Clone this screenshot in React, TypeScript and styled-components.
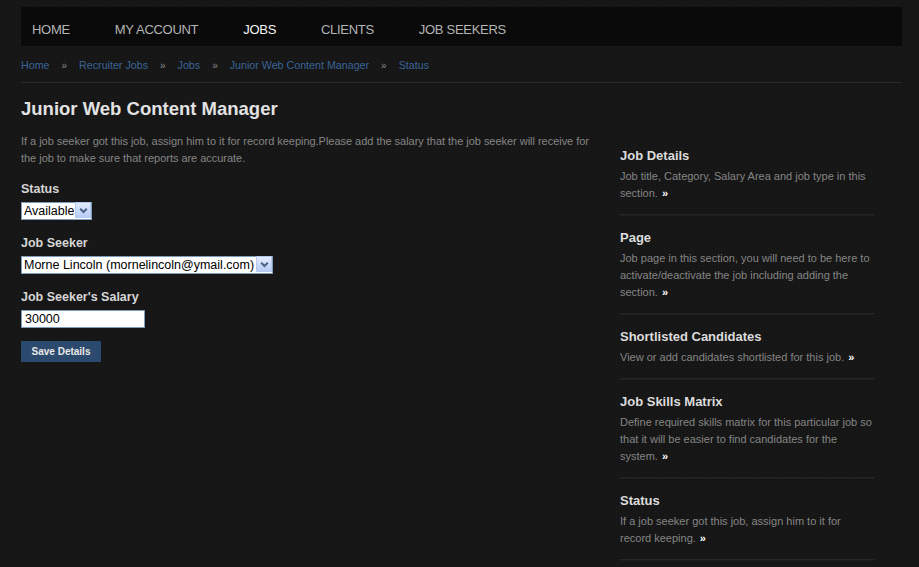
import React from "react";
import styled, { createGlobalStyle } from "styled-components";

const GlobalStyle = createGlobalStyle`
  html, body {
    margin: 0;
    padding: 0;
    background: #161616;
  }
  body {
    font-family: "Liberation Sans", Arial, sans-serif;
    color: #888;
  }
`;

const Page = styled.div`
  width: 919px;
  min-height: 567px;
  padding: 7px 17px 0 21px;
  box-sizing: border-box;
  background-color: #161616;
  background-image: radial-gradient(rgba(255, 255, 255, 0.025) 1px, transparent 1px);
  background-size: 3px 3px;
  overflow: hidden;
`;

const Nav = styled.nav`
  display: flex;
  align-items: center;
  gap: 45px;
  height: 39px;
  padding: 5px 0 0 11px;
  box-sizing: border-box;
  background: #0a0a0a;
`;

const NavItem = styled.a<{ active?: boolean }>`
  font-family: "Liberation Sans", Arial, sans-serif;
  font-size: 13px;
  letter-spacing: -0.3px;
  color: ${(props) => (props.active ? "#f4f4f4" : "#b4b4b4")};
  text-decoration: none;
  line-height: 1;
`;

const Crumbs = styled.div`
  display: flex;
  align-items: center;
  height: 37px;
  border-bottom: 1px solid #2a2a2a;
  font-size: 10.7px;
  padding-top: 2px;
  box-sizing: border-box;
`;

const Crumb = styled.a`
  color: #3a6496;
  text-decoration: none;
`;

const Sep = styled.span`
  color: #8a8a8a;
  font-size: 10px;
  margin: 0 12px;
`;

const Body = styled.div`
  display: flex;
  gap: 24px;
`;

const Main = styled.div`
  width: 575px;
`;

const Title = styled.h1`
  margin: 15px 0 0;
  font-size: 18.5px;
  line-height: 22px;
  font-weight: bold;
  color: #e2e2e2;
`;

const Intro = styled.p`
  margin: 13px 0 0;
  font-size: 11px;
  line-height: 17px;
  color: #858585;
  letter-spacing: -0.03px;
`;

const Label = styled.div<{ gapTop?: number }>`
  margin-top: ${(props) => props.gapTop ?? 14}px;
  font-size: 12.5px;
  font-weight: bold;
  color: #d6d6d6;
  line-height: 16px;
`;

const SelectWrap = styled.div<{ width: number }>`
  position: relative;
  width: ${(props) => props.width}px;
  height: 18px;
  margin-top: 4px;
`;

const Select = styled.select`
  appearance: none;
  width: 100%;
  height: 18px;
  box-sizing: border-box;
  border: 1px solid #7f9db9;
  background: #fff;
  font-family: "Liberation Sans", Arial, sans-serif;
  font-size: 12.5px;
  color: #000;
  padding: 0 17px 0 2px;
  margin: 0;
  border-radius: 0;
  outline: none;
`;

const Arrow = styled.span`
  position: absolute;
  top: 1px;
  right: 1px;
  width: 16px;
  height: 16px;
  background: linear-gradient(#e3ebfe, #b9ccf6);
  border: 1px solid #b4c7ef;
  box-sizing: border-box;
  display: flex;
  align-items: center;
  justify-content: center;
  pointer-events: none;
`;

const Input = styled.input`
  display: block;
  width: 124px;
  height: 18px;
  box-sizing: border-box;
  margin-top: 5px;
  border: 1px solid #7f9db9;
  background: #fff;
  font-family: "Liberation Sans", Arial, sans-serif;
  font-size: 12.5px;
  padding: 0 3px;
  color: #000;
  outline: none;
`;

const Button = styled.button`
  display: block;
  margin-top: 13px;
  width: 80px;
  height: 21px;
  border: none;
  background: #2c4a6d;
  color: #e8e8e8;
  font-family: "Liberation Sans", Arial, sans-serif;
  font-size: 10px;
  font-weight: bold;
  padding: 0;
`;

const Side = styled.aside`
  width: 254px;
  margin-top: 65px;
`;

const Section = styled.div<{ first?: boolean }>`
  padding: ${(props) => (props.first ? "0" : "15px")} 0 12px;
  border-bottom: 1px solid #262626;
  box-shadow: 0 1px 0 #1e1e1e;
`;

const SideTitle = styled.h3`
  margin: 0;
  font-size: 13px;
  line-height: 16px;
  font-weight: bold;
  color: #dcdcdc;
`;

const SideText = styled.p`
  margin: 4px 0 0;
  font-size: 11px;
  line-height: 17px;
  color: #858585;
`;

const Tail = styled.span`
  white-space: nowrap;
`;

const More = styled.span`
  color: #fff;
  font-weight: bold;
  margin-left: 4px;
`;

const Chevron = () => (
  <svg width="9" height="7" viewBox="0 0 9 7">
    <path d="M1.2 1.8 L4.5 5 L7.8 1.8" fill="none" stroke="#4d6185" strokeWidth="2" />
  </svg>
);

// tail = the words that sit on the last line together with the arrow
const sections = [
  { title: "Job Details", text: "Job title, Category, Salary Area and job type in this", tail: "section." },
  {
    title: "Page",
    text: "Job page in this section, you will need to be here to activate/deactivate the job including adding the",
    tail: "section.",
  },
  { title: "Shortlisted Candidates", text: "", tail: "View or add candidates shortlisted for this job." },
  {
    title: "Job Skills Matrix",
    text: "Define required skills matrix for this particular job so that it will be easier to find candidates for the",
    tail: "system.",
  },
  { title: "Status", text: "If a job seeker got this job, assign him to it for", tail: "record keeping." },
];

export default function App() {
  return (
    <>
      <GlobalStyle />
      <Page>
        <Nav>
          <NavItem href="#">HOME</NavItem>
          <NavItem href="#">MY ACCOUNT</NavItem>
          <NavItem href="#" active>
            JOBS
          </NavItem>
          <NavItem href="#">CLIENTS</NavItem>
          <NavItem href="#">JOB SEEKERS</NavItem>
        </Nav>
        <Crumbs>
          <Crumb href="#">Home</Crumb>
          <Sep>»</Sep>
          <Crumb href="#">Recruiter Jobs</Crumb>
          <Sep>»</Sep>
          <Crumb href="#">Jobs</Crumb>
          <Sep>»</Sep>
          <Crumb href="#">Junior Web Content Manager</Crumb>
          <Sep>»</Sep>
          <Crumb href="#">Status</Crumb>
        </Crumbs>
        <Body>
          <Main>
            <Title>Junior Web Content Manager</Title>
            <Intro>
              If a job seeker got this job, assign him to it for record keeping.Please add the salary that the job
              seeker will receive for the job to make sure that reports are accurate.
            </Intro>
            <Label gapTop={14}>Status</Label>
            <SelectWrap width={71}>
              <Select defaultValue="available">
                <option value="available">Available</option>
                <option value="hired">Hired</option>
              </Select>
              <Arrow>
                <Chevron />
              </Arrow>
            </SelectWrap>
            <Label gapTop={16}>Job Seeker</Label>
            <SelectWrap width={252}>
              <Select defaultValue="morne">
                <option value="morne">Morne Lincoln (mornelincoln@ymail.com)</option>
              </Select>
              <Arrow>
                <Chevron />
              </Arrow>
            </SelectWrap>
            <Label gapTop={16}>Job Seeker's Salary</Label>
            <Input defaultValue="30000" />
            <Button>Save Details</Button>
          </Main>
          <Side>
            {sections.map((s, i) => (
              <Section key={s.title} first={i === 0}>
                <SideTitle>{s.title}</SideTitle>
                <SideText>
                  {s.text && s.text + " "}
                  <Tail>
                    {s.tail}
                    <More>»</More>
                  </Tail>
                </SideText>
              </Section>
            ))}
          </Side>
        </Body>
      </Page>
    </>
  );
}
